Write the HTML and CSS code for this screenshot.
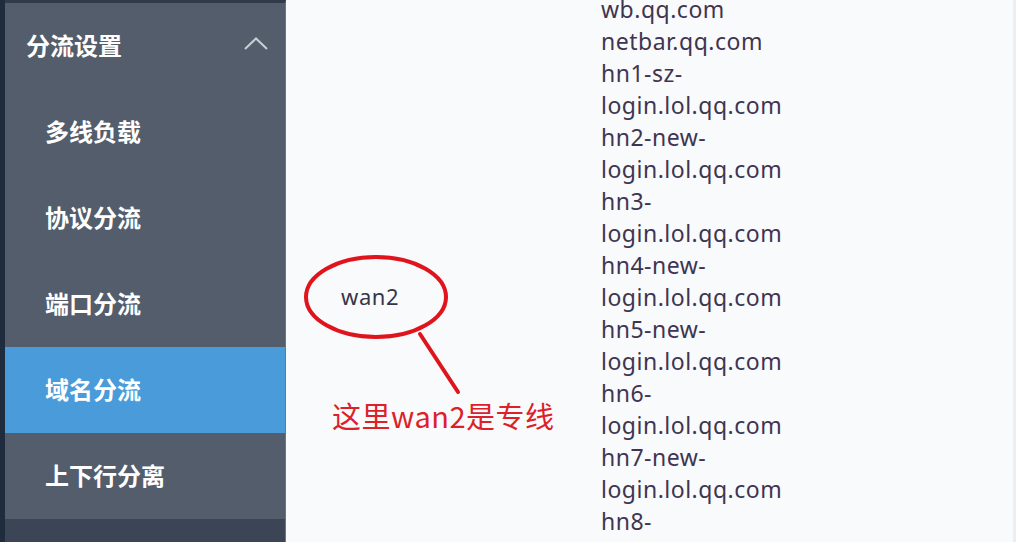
FILE: index.html
```html
<!DOCTYPE html>
<html lang="zh">
<head>
<meta charset="utf-8">
<title>域名分流</title>
<link rel="stylesheet" href="styles.css">
</head>
<body>
<div class="app">
  <aside class="sidebar">
    <div class="strip"></div>
    <nav class="menu">
      <div class="menu-head">
        <span>分流设置</span>
        <svg class="chev" width="24" height="14" viewBox="0 0 24 14"><path d="M1 12 L12 1.5 L23 12" fill="none" stroke="#c9ced6" stroke-width="2"/></svg>
      </div>
      <div class="menu-item">多线负载</div>
      <div class="menu-item">协议分流</div>
      <div class="menu-item">端口分流</div>
      <div class="menu-item active">域名分流</div>
      <div class="menu-item">上下行分离</div>
      <div class="menu-foot"></div>
    </nav>
  </aside>
  <main class="content">
    <div class="row">
      <div class="cell-line">wan2</div>
      <div class="cell-domains">
        <div>wb.qq.com</div>
        <div>netbar.qq.com</div>
        <div>hn1-sz-login.lol.qq.com</div>
        <div>hn2-new-login.lol.qq.com</div>
        <div>hn3-login.lol.qq.com</div>
        <div>hn4-new-login.lol.qq.com</div>
        <div>hn5-new-login.lol.qq.com</div>
        <div>hn6-login.lol.qq.com</div>
        <div>hn7-new-login.lol.qq.com</div>
        <div>hn8-login.lol.qq.com</div>
      </div>
    </div>
    <svg class="mark" width="200" height="150" viewBox="0 0 200 150">
      <ellipse cx="73" cy="49" rx="70" ry="40" fill="none" stroke="#e0141c" stroke-width="4"/>
      <path d="M117 86 L155 144" stroke="#e0141c" stroke-width="4" fill="none" stroke-linecap="round"/>
    </svg>
    <div class="note">这里wan2是专线</div>
  </main>
</div>
</body>
</html>
```
FILE: styles.css
```css
html, body {
  margin: 0;
  padding: 0;
}
body {
  width: 1016px;
  height: 542px;
  overflow: hidden;
  background: #f9fafc;
  font-family: "Noto Sans", "Noto Sans CJK SC", sans-serif;
}
.app {
  display: flex;
  height: 542px;
}
.sidebar {
  width: 286px;
  display: flex;
  flex-shrink: 0;
}
.strip {
  width: 5px;
  background: #1f2c3d;
}
.menu {
  flex: 1;
  display: flex;
  flex-direction: column;
  background: #535d6b;
  border-top: 3px solid #2f3a4a;
  border-right: 1px solid #6d7683;
  font-family: "Noto Sans CJK SC", sans-serif;
  color: #ffffff;
  font-weight: 700;
  font-size: 24px;
}
.menu-head {
  height: 86px;
  display: flex;
  align-items: center;
  justify-content: space-between;
  padding: 0 17px 3px 21px;
  box-sizing: border-box;
}
.menu-head span {
  margin-top: -1px;
}
.chev {
  margin-top: -1px;
}
.menu-item {
  height: 86px;
  display: flex;
  align-items: center;
  padding: 0 0 4px 40px;
  box-sizing: border-box;
}
.menu-item.active {
  background: #4a9bd9;
}
.menu-foot {
  flex: 1;
  background: #3b4555;
}
.content {
  flex: 1;
  position: relative;
  border-right: 3px solid #eceef2;
}
.row {
  display: flex;
  margin-top: -7px;
}
.cell-line {
  width: 315px;
  padding: 291px 0 0 55px;
  box-sizing: border-box;
  font-size: 22px;
  letter-spacing: 0.6px;
  line-height: 24px;
  color: #383548;
}
.cell-domains {
  width: 200px;
  font-size: 23px;
  letter-spacing: 0.5px;
  line-height: 32px;
  color: #3f3550;
}
.mark {
  position: absolute;
  left: 17px;
  top: 248px;
}
.note {
  position: absolute;
  left: 46px;
  top: 396px;
  font-family: "Noto Sans CJK SC", sans-serif;
  font-size: 29px;
  letter-spacing: 0.5px;
  line-height: 38px;
  color: #dc2128;
}
```
